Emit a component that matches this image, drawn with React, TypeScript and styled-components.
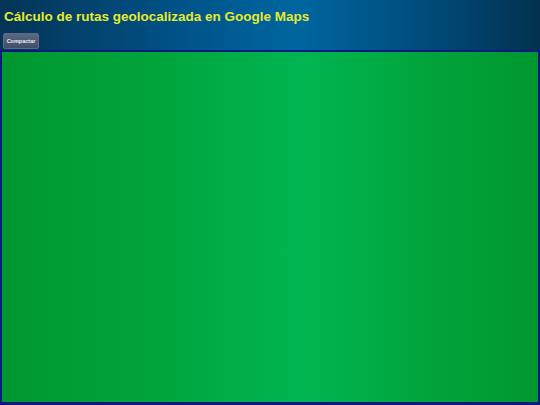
import React from "react";
import styled, { createGlobalStyle } from "styled-components";

const GlobalStyle = createGlobalStyle`
  html, body {
    margin: 0;
    padding: 0;
    height: 100%;
  }
  body {
    font-family: "Liberation Sans", Arial, sans-serif;
    background: #003a5c;
    overflow: hidden;
  }
  #root {
    height: 100%;
  }
`;

const Page = styled.div`
  display: flex;
  flex-direction: column;
  height: 405px;
  width: 540px;
`;

const Header = styled.header`
  display: flex;
  flex-direction: column;
  align-items: flex-start;
  gap: 8px;
  padding: 8px 3px 1px 3px;
  background: linear-gradient(
    to right,
    #053456 0%,
    #00548a 35%,
    #0066a0 55%,
    #004a78 80%,
    #03314f 100%
  );
`;

const Title = styled.h1`
  margin: 0 0 0 1px;
  font-size: 13.5px;
  font-weight: bold;
  line-height: 17px;
  color: #e6ea2c;
`;

const CompactButton = styled.button`
  height: 16px;
  width: 36px;
  padding: 0;
  border: 1px solid #5c6a86;
  border-radius: 2px;
  background: linear-gradient(to bottom, #5a6884, #414e6a);
  color: #e8ecf2;
  font-family: "Liberation Sans", Arial, sans-serif;
  font-size: 5.5px;
  font-weight: bold;
  cursor: pointer;
`;

const MapArea = styled.main`
  flex: 1;
  border: 2px solid #0a1a80;
  border-bottom-width: 3px;
  background: linear-gradient(
    to right,
    #00972f 0%,
    #00a53c 30%,
    #00b552 56%,
    #00a53c 78%,
    #00972f 100%
  );
`;

const App = () => {
  return (
    <>
      <GlobalStyle />
      <Page>
        <Header>
          <Title>Cálculo de rutas geolocalizada en Google Maps</Title>
          <CompactButton>Compactar</CompactButton>
        </Header>
        <MapArea />
      </Page>
    </>
  );
};

export default App;
